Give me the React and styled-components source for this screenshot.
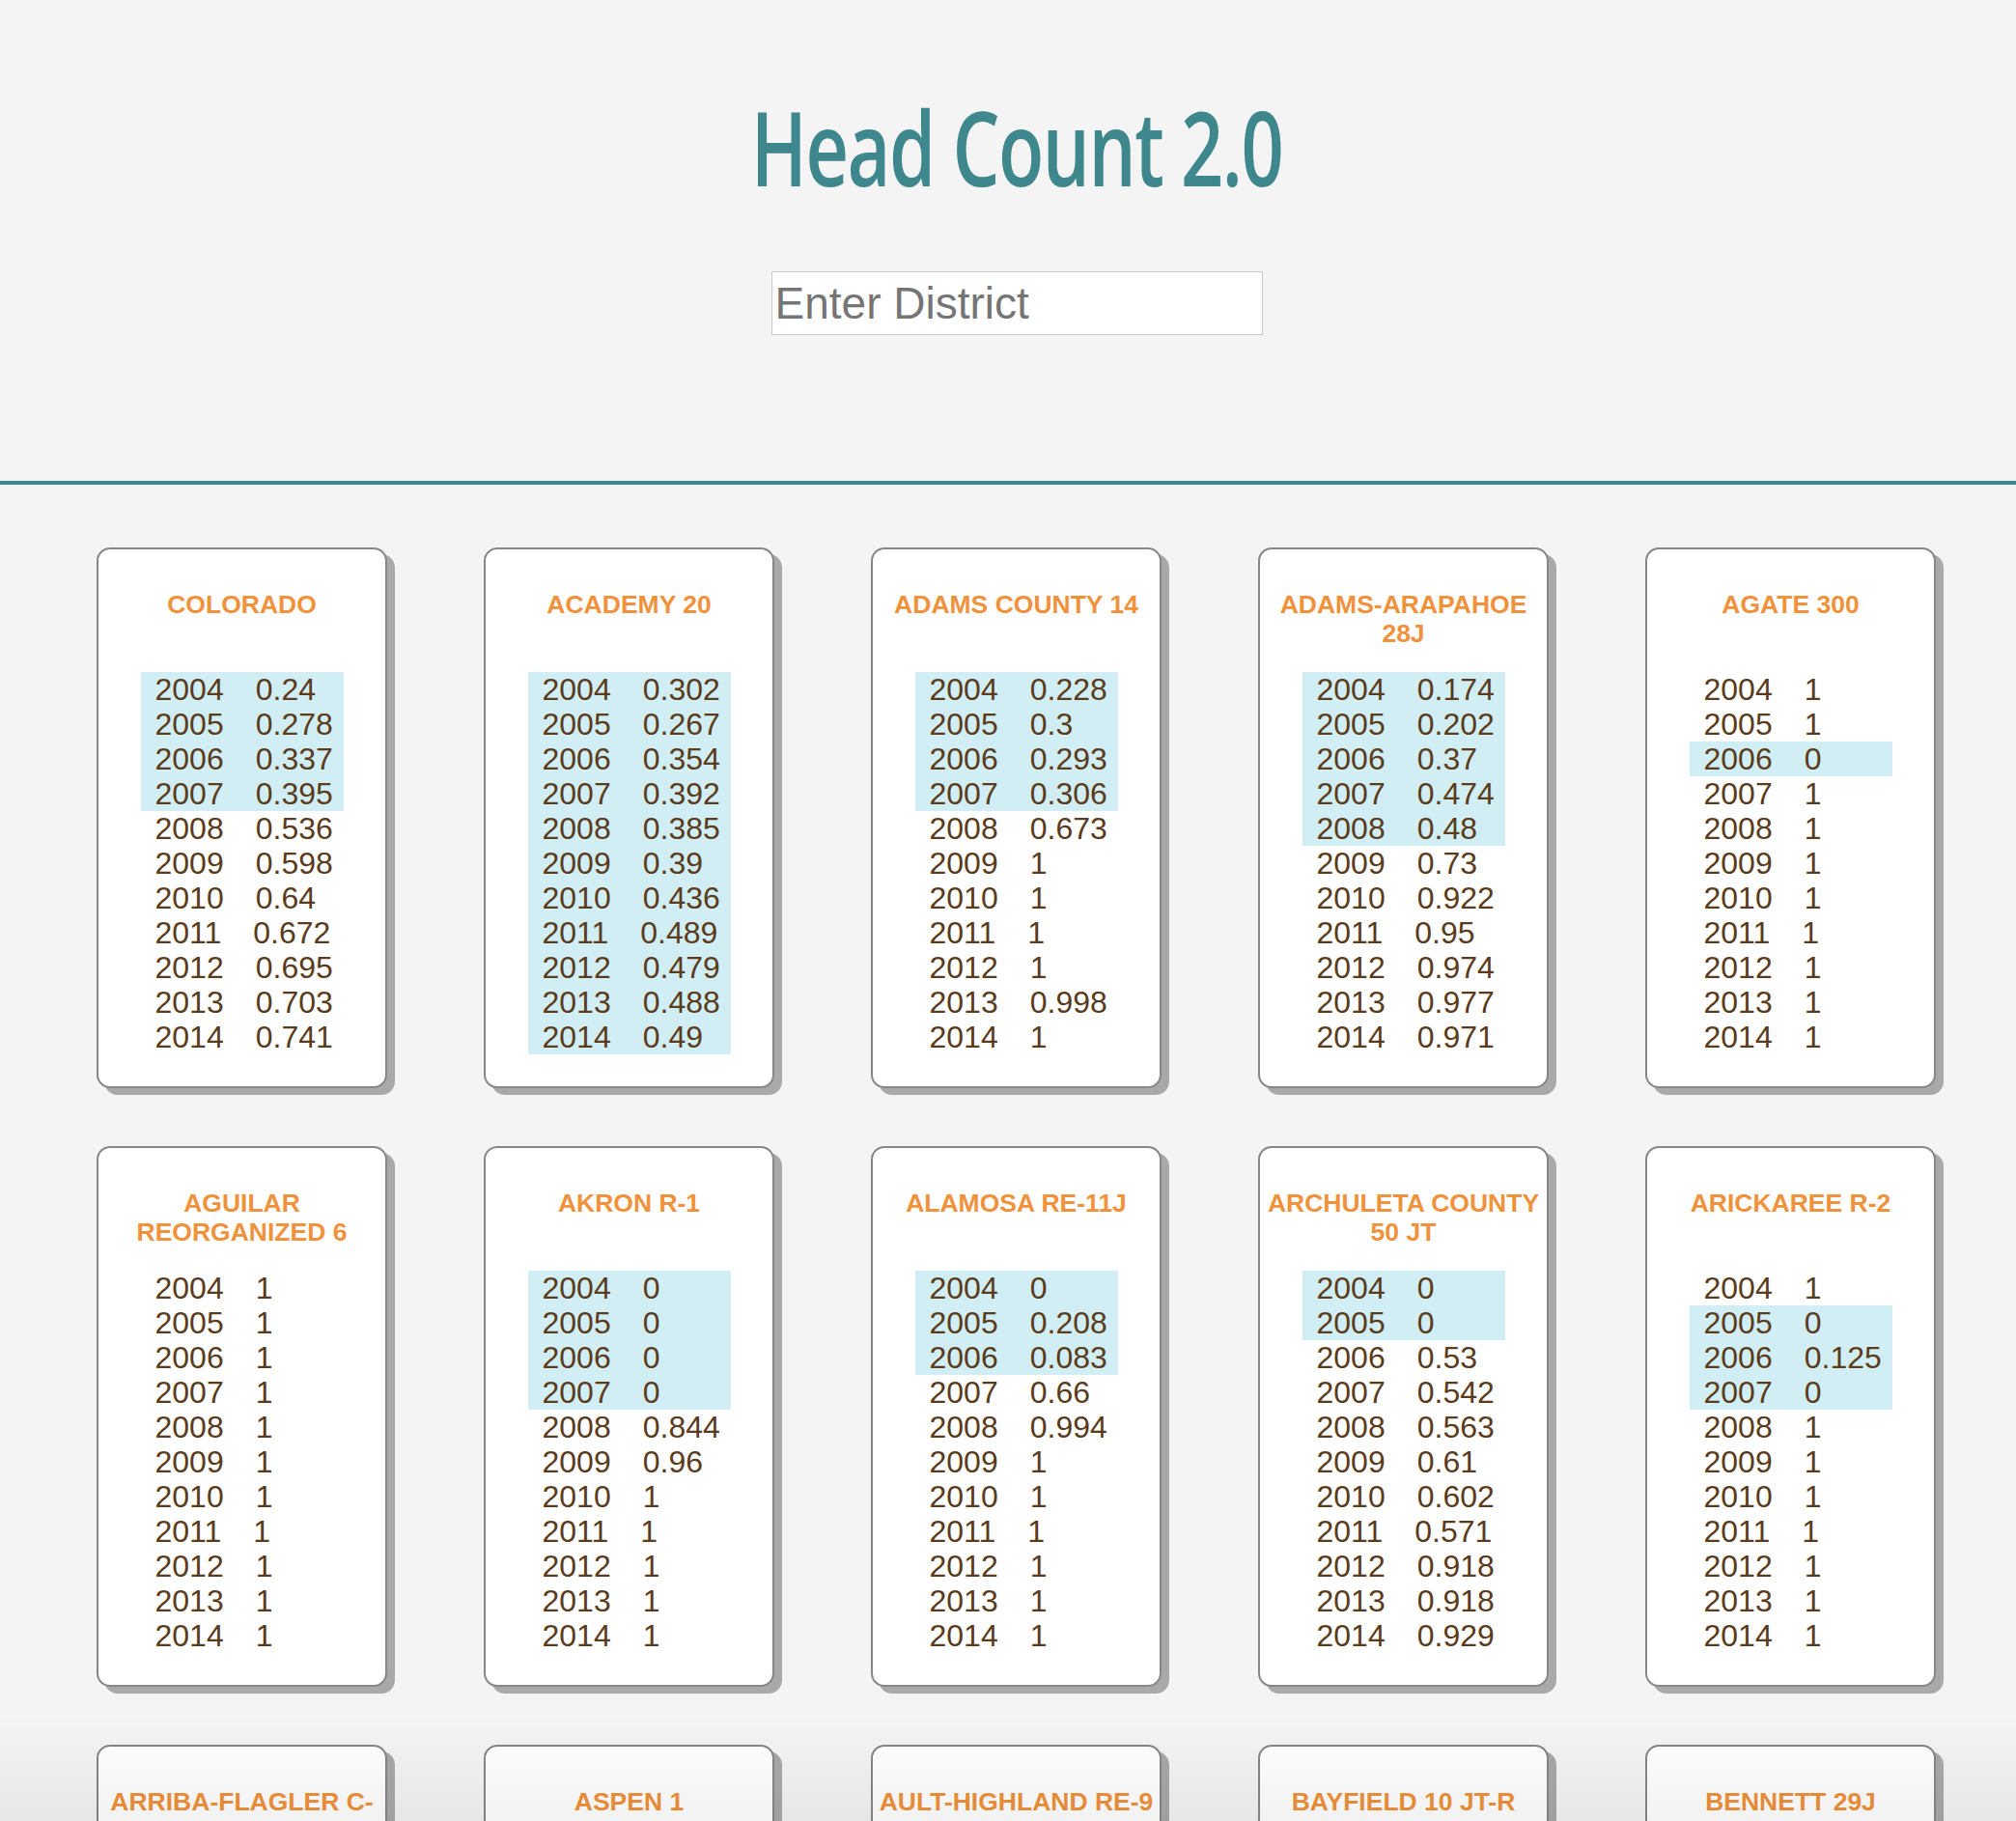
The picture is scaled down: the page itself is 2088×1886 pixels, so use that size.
import React from 'react';
import styled, { createGlobalStyle } from 'styled-components';

const YEARS = [2004, 2005, 2006, 2007, 2008, 2009, 2010, 2011, 2012, 2013, 2014];

const districts = [
  { name: 'COLORADO', values: [0.24, 0.278, 0.337, 0.395, 0.536, 0.598, 0.64, 0.672, 0.695, 0.703, 0.741] },
  { name: 'ACADEMY 20', values: [0.302, 0.267, 0.354, 0.392, 0.385, 0.39, 0.436, 0.489, 0.479, 0.488, 0.49] },
  { name: 'ADAMS COUNTY 14', values: [0.228, 0.3, 0.293, 0.306, 0.673, 1, 1, 1, 1, 0.998, 1] },
  { name: 'ADAMS-ARAPAHOE 28J', values: [0.174, 0.202, 0.37, 0.474, 0.48, 0.73, 0.922, 0.95, 0.974, 0.977, 0.971] },
  { name: 'AGATE 300', values: [1, 1, 0, 1, 1, 1, 1, 1, 1, 1, 1] },
  { name: 'AGUILAR REORGANIZED 6', values: [1, 1, 1, 1, 1, 1, 1, 1, 1, 1, 1] },
  { name: 'AKRON R-1', values: [0, 0, 0, 0, 0.844, 0.96, 1, 1, 1, 1, 1] },
  { name: 'ALAMOSA RE-11J', values: [0, 0.208, 0.083, 0.66, 0.994, 1, 1, 1, 1, 1, 1] },
  { name: 'ARCHULETA COUNTY 50 JT', values: [0, 0, 0.53, 0.542, 0.563, 0.61, 0.602, 0.571, 0.918, 0.918, 0.929] },
  { name: 'ARICKAREE R-2', values: [1, 0, 0.125, 0, 1, 1, 1, 1, 1, 1, 1] },
  { name: 'ARRIBA-FLAGLER C-20', values: [1, 1, 1, 1, 1, 1, 1, 1, 1, 1, 1] },
  { name: 'ASPEN 1', values: [1, 1, 1, 1, 1, 1, 1, 1, 1, 1, 1] },
  { name: 'AULT-HIGHLAND RE-9', values: [1, 1, 1, 1, 1, 1, 1, 1, 1, 1, 1] },
  { name: 'BAYFIELD 10 JT-R', values: [1, 1, 1, 1, 1, 1, 1, 1, 1, 1, 1] },
  { name: 'BENNETT 29J', values: [1, 1, 1, 1, 1, 1, 1, 1, 1, 1, 1] },
];

const App = () => {
  return (
    <>
      <GlobalStyle />
      <Page>
        <Header>
          <Title>
            <TitleText>Head Count 2.0</TitleText>
          </Title>
          <SearchInput type="text" placeholder="Enter District" />
        </Header>
        <Divider />
        <CardGrid>
          {districts.map((district) => (
            <Card key={district.name}>
              <CardTitle>{district.name}</CardTitle>
              <YearList>
                {YEARS.map((year, i) => (
                  <YearRow key={year} $low={district.values[i] < 0.5}>
                    <Year>{year}</Year>
                    <Value>{district.values[i]}</Value>
                  </YearRow>
                ))}
              </YearList>
            </Card>
          ))}
        </CardGrid>
      </Page>
      <BottomFade />
    </>
  );
};

export default App;

const GlobalStyle = createGlobalStyle`
  html, body {
    margin: 0;
    padding: 0;
    background: #f4f4f4;
  }
  body {
    font-family: 'Liberation Sans', Arial, sans-serif;
  }
`;

const Page = styled.div`
  min-height: 100vh;
  background: #f4f4f4;
`;

const Header = styled.header`
  display: flex;
  flex-direction: column;
  align-items: center;
  padding: 100px 0 151px 18px;
`;

const Title = styled.h1`
  margin: 0;
  height: 105px;
  font-family: 'Open Sans', sans-serif;
  font-size: 106px;
  font-weight: 600;
  line-height: 105px;
  color: #3e878d;
  white-space: nowrap;
`;

const TitleText = styled.span`
  display: inline-block;
  letter-spacing: -2px;
  transform: scaleX(0.73);
`;

const SearchInput = styled.input`
  box-sizing: border-box;
  width: 509px;
  height: 66px;
  margin-top: 76px;
  padding: 0 3px;
  border: 1px solid #c9c9c9;
  background: #ffffff;
  font-family: 'Liberation Sans', Arial, sans-serif;
  font-size: 46px;
  color: #333;
  outline: none;

  &::placeholder {
    color: #757575;
  }
`;

const Divider = styled.hr`
  margin: 0;
  height: 4px;
  border: none;
  background: #3e878d;
`;

const CardGrid = styled.main`
  display: flex;
  flex-wrap: wrap;
  column-gap: 100px;
  row-gap: 60px;
  padding: 65px 0 80px 100px;
`;

const Card = styled.section`
  box-sizing: border-box;
  width: 301px;
  height: 560px;
  padding-top: 42px;
  border: 2px solid #878787;
  border-radius: 14px;
  background: #ffffff;
  box-shadow: 8px 7px 0 #a9a9a9;
`;

const CardTitle = styled.h2`
  box-sizing: border-box;
  min-height: 85px;
  margin: 0;
  padding: 0 6px;
  font-size: 26.5px;
  font-weight: 700;
  line-height: 30px;
  text-align: center;
  color: #f0923b;
`;

const YearList = styled.ul`
  margin: 0;
  padding: 0;
  list-style: none;
`;

const YearRow = styled.li`
  box-sizing: border-box;
  display: flex;
  width: 210px;
  height: 36px;
  margin: 0 auto;
  padding-left: 15px;
  font-size: 32px;
  line-height: 36px;
  color: #5a3b1c;
  background: ${(props) => (props.$low ? '#d0eef3' : 'transparent')};
`;

const Year = styled.span``;

const Value = styled.span`
  margin-left: 33px;
`;

const BottomFade = styled.div`
  position: fixed;
  left: 0;
  right: 0;
  bottom: 0;
  height: 110px;
  pointer-events: none;
  background: linear-gradient(to bottom, rgba(0, 0, 0, 0), rgba(0, 0, 0, 0.05));
`;
